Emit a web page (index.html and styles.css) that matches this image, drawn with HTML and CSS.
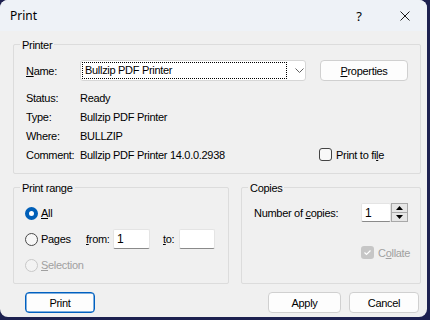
FILE: index.html
```html
<!DOCTYPE html>
<html lang="en">
<head>
  <meta charset="UTF-8">
  <title>Print</title>
  <link rel="stylesheet" href="styles.css">
</head>
<body>
  <div class="window">
    <div class="titlebar">
      <span class="title">Print</span>
      <span class="tb-btn">?</span>
      <span class="tb-btn">
        <svg width="10" height="10" viewBox="0 0 10 10"><path d="M0.5 0.5 L9.5 9.5 M9.5 0.5 L0.5 9.5" stroke="#1a1a1a" stroke-width="1" fill="none"/></svg>
      </span>
    </div>
    <div class="content">
      <div class="group printer">
        <span class="legend">Printer</span>
        <div class="group-body">
          <div class="name-row">
            <span class="lbl"><u>N</u>ame:</span>
            <div class="combo">
              <span class="combo-text">Bullzip PDF Printer</span>
              <svg class="chevron" width="9" height="5" viewBox="0 0 9 5"><path d="M0.5 0.5 L4.5 4.5 L8.5 0.5" stroke="#606060" stroke-width="1" fill="none"/></svg>
            </div>
            <button class="btn props"><u>P</u>roperties</button>
          </div>
          <div class="info">
            <div class="row"><span class="lbl">Status:</span><span class="val">Ready</span></div>
            <div class="row"><span class="lbl">Type:</span><span class="val">Bullzip PDF Printer</span></div>
            <div class="row"><span class="lbl">Where:</span><span class="val">BULLZIP</span></div>
            <div class="row">
              <span class="lbl">Comment:</span><span class="val">Bullzip PDF Printer 14.0.0.2938</span>
              <label class="check to-file"><span class="box"></span>Print to fi<u>l</u>e</label>
            </div>
          </div>
        </div>
      </div>

      <div class="lower">
        <div class="group range">
          <span class="legend">Print range</span>
          <div class="group-body">
            <div class="radio-row">
              <label class="radio-item"><span class="radio checked"></span><u>A</u>ll</label>
            </div>
            <div class="radio-row">
              <label class="radio-item"><span class="radio"></span>Pa<u>g</u>es</label>
              <span class="from-lbl"><u>f</u>rom:</span>
              <span class="field from">1</span>
              <span class="to-lbl"><u>t</u>o:</span>
              <span class="field to"></span>
            </div>
            <div class="radio-row">
              <label class="radio-item disabled"><span class="radio"></span><u>S</u>election</label>
            </div>
          </div>
        </div>

        <div class="group copies">
          <span class="legend">Copies</span>
          <div class="group-body">
            <div class="copies-row">
              <span class="copies-lbl">Number of <u>c</u>opies:</span>
              <span class="field spin-field">1</span>
              <div class="spinner">
                <span class="spin-btn"><svg width="7" height="4" viewBox="0 0 7 4"><path d="M0 4 L3.5 0 L7 4 Z" fill="#000"/></svg></span>
                <span class="spin-btn"><svg width="7" height="4" viewBox="0 0 7 4"><path d="M0 0 L3.5 4 L7 0 Z" fill="#000"/></svg></span>
              </div>
            </div>
            <label class="check collate disabled">
              <span class="box checked">
                <svg width="11" height="11" viewBox="0 0 11 11"><path d="M2.5 5.5 L4.5 7.5 L8.5 3.5" stroke="#fff" stroke-width="1.2" fill="none"/></svg>
              </span>C<u>o</u>llate
            </label>
          </div>
        </div>
      </div>

      <div class="buttons">
        <button class="btn default">Print</button>
        <span class="spacer"></span>
        <button class="btn apply">Apply</button>
        <button class="btn cancel">Cancel</button>
      </div>
    </div>
  </div>
</body>
</html>
```

FILE: styles.css
```css
body {
  margin: 0;
  width: 430px;
  height: 320px;
  background: #1d2150;
  font-family: 'Liberation Sans', Arial, sans-serif;
  font-size: 11px;
  letter-spacing: -0.3px;
  color: #000;
}
u {
  text-decoration: underline;
  text-underline-offset: 1px;
}
.window {
  width: 427px;
  height: 317px;
  background: #f0f0f0;
  border-radius: 8px;
  overflow: hidden;
}
.titlebar {
  height: 31px;
  background: #eef2f7;
  display: flex;
  align-items: center;
}
.title {
  font-family: 'Noto Sans', 'Open Sans', sans-serif;
  font-size: 12px;
  letter-spacing: 0;
  padding-left: 10px;
  flex: 1;
}
.tb-btn {
  width: 46px;
  height: 31px;
  display: flex;
  align-items: center;
  justify-content: center;
  font-family: 'Noto Sans', sans-serif;
  font-size: 13px;
  letter-spacing: 0;
}
.tb-btn:last-child {
  width: 45px;
}
.content {
  padding: 13px 6px 0 13px;
}
.group {
  border: 1px solid #dcdcdc;
  border-radius: 2px;
  box-sizing: border-box;
}
.legend {
  display: block;
  width: fit-content;
  margin: -7px 0 0 6px;
  padding: 0 2px;
  line-height: 14px;
  background: #f0f0f0;
}

/* printer box */
.printer .group-body {
  padding: 0 12px 9px 12px;
}
.name-row {
  display: flex;
  align-items: center;
  margin-top: 8px;
  height: 21px;
}
.lbl {
  width: 54px;
  flex: none;
}
.combo {
  width: 226px;
  height: 21px;
  box-sizing: border-box;
  background: #fff;
  border: 1px solid #d6d6d6;
  border-radius: 3px;
  display: flex;
  align-items: center;
  padding: 1px 0 1px 1px;
}
.combo-text {
  width: 205px;
  height: 17px;
  box-sizing: border-box;
  border: 1px dotted #000;
  padding-left: 2px;
  line-height: 15px;
}
.chevron {
  margin-left: 8px;
}
.btn {
  font-family: inherit;
  font-size: 11px;
  letter-spacing: -0.3px;
  color: #000;
  background: #fdfdfd;
  border: 1px solid #d0d0d0;
  border-radius: 4px;
  height: 21px;
  padding: 0;
  box-sizing: border-box;
}
.props {
  width: 88px;
  margin-left: 14px;
}
.info {
  margin-top: 7px;
}
.row {
  display: flex;
  align-items: center;
  height: 19px;
}
.val {
  flex: 1;
}
.check {
  display: flex;
  align-items: center;
}
.box {
  width: 13px;
  height: 13px;
  box-sizing: border-box;
  border: 1px solid #444;
  border-radius: 3px;
  background: #f8f8f8;
  margin-right: 4px;
  display: flex;
  align-items: center;
  justify-content: center;
}
.to-file {
  width: 89px;
  margin-left: -1px;
}

/* lower boxes */
.lower {
  display: flex;
  gap: 12px;
  margin-top: 13px;
}
.range {
  width: 216px;
  height: 97px;
}
.range .group-body {
  padding: 5px 0 0 11px;
}
.copies {
  width: 180px;
  height: 97px;
}
.copies .group-body {
  padding: 8px 0 0 12px;
}
.radio-row {
  display: flex;
  align-items: center;
  height: 26px;
}
.radio-item {
  display: flex;
  align-items: center;
  width: 61px;
}
.radio {
  width: 13px;
  height: 13px;
  box-sizing: border-box;
  border-radius: 50%;
  border: 1px solid #4a4a4a;
  background: #f7f7f7;
  margin-right: 3px;
}
.radio.checked {
  border: 4px solid #005fb8;
  background: #fff;
}
.disabled {
  color: #a0a0a0;
}
.disabled .radio {
  border-color: #c8c8c8;
  background: #f3f3f3;
}
.from-lbl {
  width: 27px;
}
.to-lbl {
  width: 16px;
  margin-left: 13px;
}
.field {
  height: 20px;
  box-sizing: border-box;
  background: #fff;
  border: 1px solid #e4e4e4;
  border-bottom-color: #8a8a8a;
  border-radius: 2px;
  padding-left: 3px;
  line-height: 18px;
  font-size: 12px;
}
.from {
  width: 37px;
}
.to {
  width: 36px;
}

.copies-row {
  display: flex;
  align-items: center;
  height: 19px;
}
.copies-lbl {
  width: 107px;
}
.spin-field {
  width: 30px;
  height: 19px;
}
.spinner {
  width: 17px;
  height: 19px;
  box-sizing: border-box;
  border: 1px solid #a8a8a8;
  background: #e6e6e6;
  display: flex;
  flex-direction: column;
}
.spin-btn {
  flex: 1;
  display: flex;
  align-items: center;
  justify-content: center;
}
.spin-btn:first-child {
  border-bottom: 1px solid #a8a8a8;
}
.collate {
  margin: 24px 0 0 107px;
  height: 13px;
}
.collate .box {
  border: none;
  background: #c6c6c6;
}

/* bottom buttons */
.buttons {
  display: flex;
  margin: 8px 0 0 12px;
}
.spacer {
  flex: 1;
}
.default {
  width: 70px;
  border-color: #0060c0;
  box-shadow: inset 0 0 0 0.5px #0060c0;
}
.apply {
  width: 73px;
}
.cancel {
  width: 70px;
  margin: 0 2px 0 8px;
}
```
